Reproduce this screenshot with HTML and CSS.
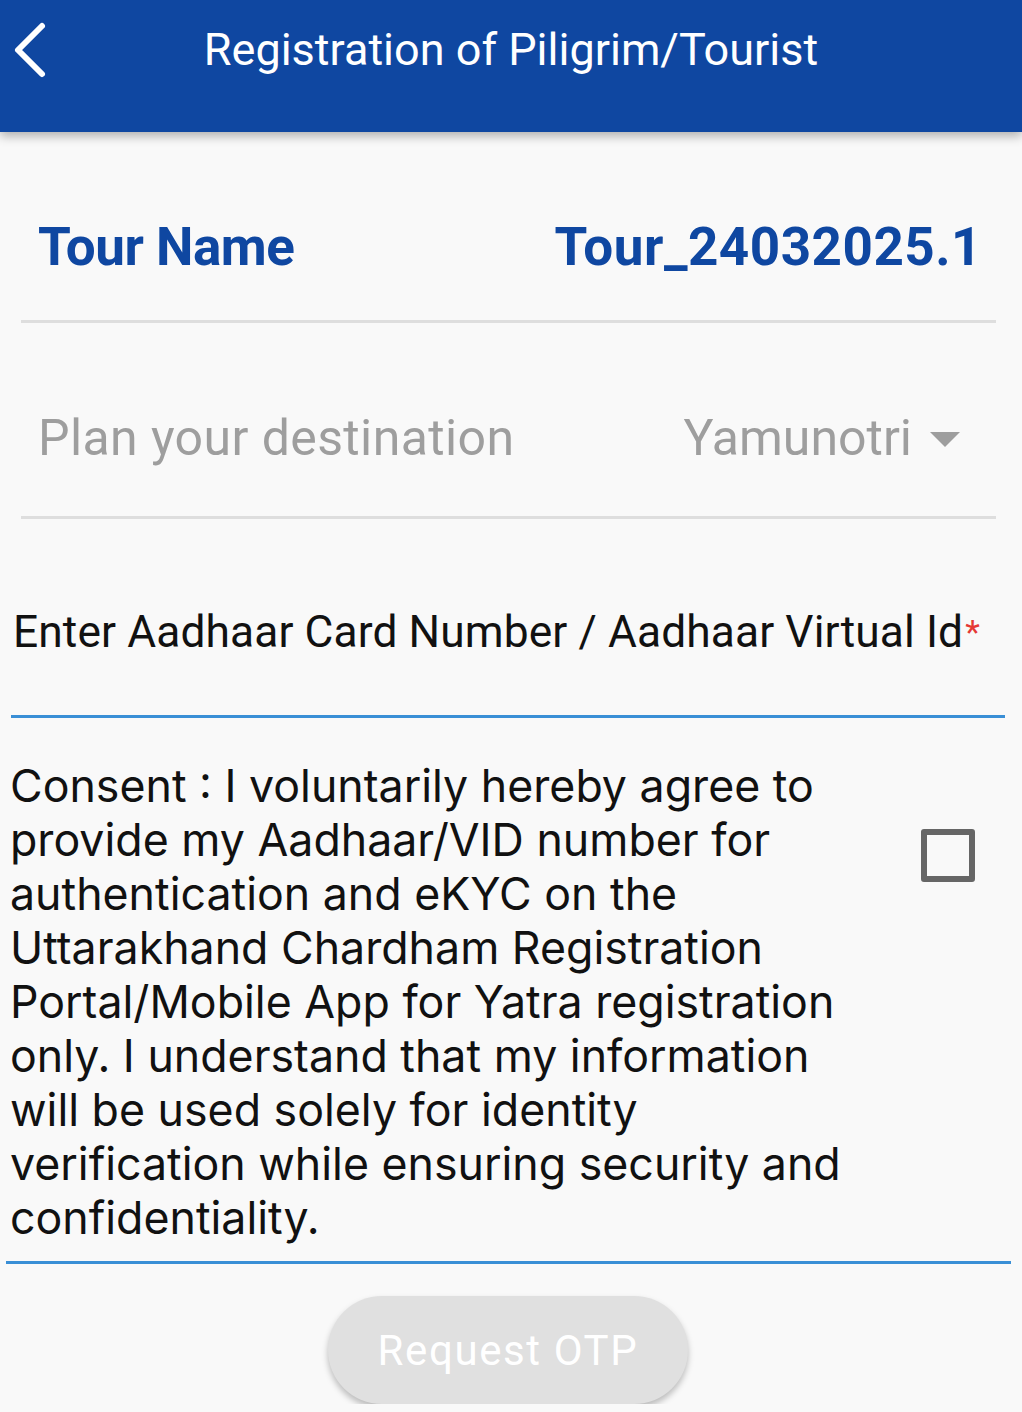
FILE: index.html
```html
<!DOCTYPE html>
<html>
<head>
<meta charset="utf-8">
<link rel="stylesheet" href="styles.css">
</head>
<body>
<header class="appbar">
  <svg class="back" width="40" height="60" viewBox="0 0 40 60"><path d="M32 6 L8 30 L32 54" fill="none" stroke="#fff" stroke-width="6" stroke-linecap="round" stroke-linejoin="round"/></svg>
  <h1 class="title">Registration of Piligrim/Tourist</h1>
</header>
<main class="content">
  <div class="row tour">
    <span class="tour-label">Tour Name</span>
    <span class="tour-value">Tour_24032025.1</span>
  </div>
  <div class="row dest">
    <span class="dest-label">Plan your destination</span>
    <span class="dest-select">Yamunotri <span class="caret"></span></span>
  </div>
  <div class="aadhaar">
    <div class="aadhaar-label">Enter Aadhaar Card Number / Aadhaar Virtual Id<span class="req">*</span></div>
  </div>
  <div class="consent">
    <p class="consent-text">Consent : I voluntarily hereby agree to provide my Aadhaar/VID number for authentication and eKYC on the Uttarakhand Chardham Registration Portal/Mobile App for Yatra registration only. I understand that my information will be used solely for identity verification while ensuring security and confidentiality.</p>
    <span class="checkbox"></span>
  </div>
  <div class="actions">
    <button class="otp">Request OTP</button>
  </div>
</main>
</body>
</html>
```
FILE: styles.css
```css
html, body {
  margin: 0;
  padding: 0;
  background: #f9f9f9;
  font-family: Roboto, "Noto Sans", sans-serif;
}
.appbar {
  height: 132px;
  background: #0f47a1;
  position: relative;
  box-shadow: 0 4px 10px rgba(0,0,0,0.3);
  display: flex;
  justify-content: center;
}
.back {
  position: absolute;
  left: 10px;
  top: 20px;
}
.title {
  margin: 0;
  margin-top: 22px;
  color: #fff;
  font-weight: 400;
  font-size: 45px;
  line-height: 56px;
  letter-spacing: 0;
  height: 56px;
}
.content {
  display: flex;
  flex-direction: column;
}
.row {
  margin: 0 26px 0 21px;
  display: flex;
  justify-content: space-between;
  align-items: center;
  border-bottom: 3px solid #dedede;
}
.tour {
  height: 146px;
  padding: 42px 14px 0 17px;
}
.tour-label, .tour-value {
  color: #0f47a1;
  font-weight: 700;
  font-size: 53px;
}
.tour-label {
  letter-spacing: -0.5px;
}
.tour-value {
  letter-spacing: 0.5px;
}
.dest {
  height: 157px;
  padding: 36px 36px 0 17px;
}
.dest-label, .dest-select {
  color: #9e9e9e;
  font-size: 50px;
  font-weight: 400;
}
.dest-label {
  letter-spacing: 0.4px;
}
.dest-select {
  display: flex;
  align-items: center;
}
.caret {
  display: inline-block;
  width: 0; height: 0;
  border-left: 15px solid transparent;
  border-right: 15px solid transparent;
  border-top: 15px solid #9e9e9e;
  margin-left: 18px;
  margin-top: 4px;
}
.aadhaar {
  margin: 0 17px 0 11px;
  height: 196px;
  border-bottom: 3px solid #3a8fd6;
  display: flex;
}
.aadhaar-label {
  margin-top: 89px;
  margin-left: 2px;
  font-size: 44.3px;
  letter-spacing: 0.1px;
  line-height: 48px;
  color: #111;
  height: 48px;
}
.req {
  color: #e53935;
  font-size: 34px;
  vertical-align: top;
  margin-left: 2px;
}
.consent {
  margin: 0 11px 0 6px;
  border-bottom: 3px solid #3a8fd6;
  display: flex;
  align-items: flex-start;
  padding: 41px 0 16px 4px;
}
.consent-text {
  margin: 0;
  width: 860px;
  font-family: Inter, "Noto Sans", sans-serif;
  font-size: 44.7px;
  line-height: 54px;
  color: #111;
}
.checkbox {
  flex: none;
  width: 42px;
  height: 41px;
  border: 6px solid #666;
  border-radius: 3px;
  margin-left: 51px;
  margin-top: 70px;
}
.actions {
  display: flex;
  justify-content: center;
  padding-top: 32px;
}
.otp {
  width: 360px;
  height: 108px;
  border: none;
  border-radius: 54px;
  background: #e0e0e0;
  color: #fff;
  font-family: Roboto, sans-serif;
  font-size: 42px;
  letter-spacing: 1.6px;
  box-shadow: 0 4px 6px rgba(0,0,0,0.25);
  margin-right: 6px;
}
```
